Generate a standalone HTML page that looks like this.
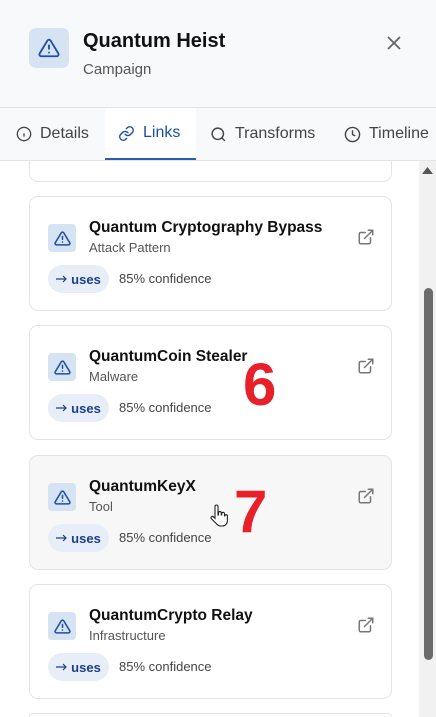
<!DOCTYPE html>
<html><head><meta charset="utf-8"><style>
*{box-sizing:border-box;margin:0;padding:0}
html,body{width:436px;height:717px;overflow:hidden}
body{background:#fff;font-family:"Liberation Sans",sans-serif;position:relative}
.hdr{position:absolute;left:0;top:0;width:436px;height:108px;background:#f8f9fa;border-bottom:1px solid #dfe1e5;z-index:5}
.hicon{position:absolute;left:29px;top:28px;width:40px;height:40px;border-radius:7px;background:#d6e3f3;display:flex;align-items:center;justify-content:center}
.title{position:absolute;left:83px;top:30px;font-size:20px;font-weight:bold;color:#111}
.sub{position:absolute;left:83px;top:61px;font-size:15px;color:#555}
.close{position:absolute;left:386px;top:35px}
.tabs{position:absolute;left:0;top:108px;width:436px;height:53px;background:#f8f9fa;border-bottom:1px solid #e3e5e8;z-index:5}
.tab{position:absolute;top:0;height:52px;display:flex;align-items:center;gap:8px;font-size:16px;color:#444}
.tab.act{background:#fff;color:#1d4fa8;border-bottom:2px solid #2a5db8}
.card{position:absolute;left:29px;width:363px;height:115px;border:1px solid #e2e4e8;border-radius:9px;background:#fff}
.card.hov{background:#f7f7f8}
.ci{position:absolute;left:18px;top:27px;width:28px;height:28px;border-radius:4px;background:#d6e3f3;display:flex;align-items:center;justify-content:center}
.cn{position:absolute;left:59px;top:22px;font-size:15.5px;font-weight:bold;color:#111}
.ct{position:absolute;left:59px;top:43px;font-size:13px;color:#555}
.ext{position:absolute;left:327px;top:31px}
.pill{position:absolute;left:18px;top:68px;width:61px;height:28px;border-radius:14px;background:#e8eef8;color:#1d3f8a;font-size:13px;font-weight:bold;display:flex;align-items:center;justify-content:center;gap:4px}
.conf{position:absolute;left:89px;top:74px;font-size:13px;color:#444}
.sb{position:absolute;left:419px;top:161px;width:17px;height:556px;background:#f1f1f1;z-index:6}
.thumb{position:absolute;left:424px;top:288px;width:9px;height:372px;border-radius:5px;background:#6b6b6b;z-index:7}
.num{position:absolute;font-size:60px;font-weight:bold;color:#e8202a;line-height:1}
</style></head><body>
<div class="card" style="top:67px"></div>

<div class="card" style="top:196px"><div class="ci"><svg width="17" height="17" viewBox="0 0 24 24" fill="none" stroke="#1d4fa8" stroke-width="2.2" stroke-linecap="round" stroke-linejoin="round"><path d="M10.3 3.9 1.8 18a2 2 0 0 0 1.7 3h17a2 2 0 0 0 1.7-3L13.7 3.9a2 2 0 0 0-3.4 0z"/><path d="M12 9v4M12 17h.01"/></svg></div><div class="cn">Quantum Cryptography Bypass</div><div class="ct">Attack Pattern</div><svg class="ext" width="18" height="18" viewBox="0 0 24 24" fill="none" stroke="#777" stroke-width="2" stroke-linecap="round"><path d="M18 13v6a2 2 0 0 1-2 2H5a2 2 0 0 1-2-2V8a2 2 0 0 1 2-2h6M15 3h6v6M10 14 21 3"/></svg><div class="pill"><svg width="11" height="8" viewBox="0 0 11 8" fill="none" stroke="#1d3f8a" stroke-width="1.2"><path d="M0 4h10M7 1l3 3-3 3"/></svg>uses</div><div class="conf">85% confidence</div></div>

<div class="card" style="top:325px"><div class="ci"><svg width="17" height="17" viewBox="0 0 24 24" fill="none" stroke="#1d4fa8" stroke-width="2.2" stroke-linecap="round" stroke-linejoin="round"><path d="M10.3 3.9 1.8 18a2 2 0 0 0 1.7 3h17a2 2 0 0 0 1.7-3L13.7 3.9a2 2 0 0 0-3.4 0z"/><path d="M12 9v4M12 17h.01"/></svg></div><div class="cn">QuantumCoin Stealer</div><div class="ct">Malware</div><svg class="ext" width="18" height="18" viewBox="0 0 24 24" fill="none" stroke="#777" stroke-width="2" stroke-linecap="round"><path d="M18 13v6a2 2 0 0 1-2 2H5a2 2 0 0 1-2-2V8a2 2 0 0 1 2-2h6M15 3h6v6M10 14 21 3"/></svg><div class="pill"><svg width="11" height="8" viewBox="0 0 11 8" fill="none" stroke="#1d3f8a" stroke-width="1.2"><path d="M0 4h10M7 1l3 3-3 3"/></svg>uses</div><div class="conf">85% confidence</div></div>

<div class="card hov" style="top:455px"><div class="ci"><svg width="17" height="17" viewBox="0 0 24 24" fill="none" stroke="#1d4fa8" stroke-width="2.2" stroke-linecap="round" stroke-linejoin="round"><path d="M10.3 3.9 1.8 18a2 2 0 0 0 1.7 3h17a2 2 0 0 0 1.7-3L13.7 3.9a2 2 0 0 0-3.4 0z"/><path d="M12 9v4M12 17h.01"/></svg></div><div class="cn">QuantumKeyX</div><div class="ct">Tool</div><svg class="ext" width="18" height="18" viewBox="0 0 24 24" fill="none" stroke="#777" stroke-width="2" stroke-linecap="round"><path d="M18 13v6a2 2 0 0 1-2 2H5a2 2 0 0 1-2-2V8a2 2 0 0 1 2-2h6M15 3h6v6M10 14 21 3"/></svg><div class="pill"><svg width="11" height="8" viewBox="0 0 11 8" fill="none" stroke="#1d3f8a" stroke-width="1.2"><path d="M0 4h10M7 1l3 3-3 3"/></svg>uses</div><div class="conf">85% confidence</div></div>

<div class="card" style="top:584px"><div class="ci"><svg width="17" height="17" viewBox="0 0 24 24" fill="none" stroke="#1d4fa8" stroke-width="2.2" stroke-linecap="round" stroke-linejoin="round"><path d="M10.3 3.9 1.8 18a2 2 0 0 0 1.7 3h17a2 2 0 0 0 1.7-3L13.7 3.9a2 2 0 0 0-3.4 0z"/><path d="M12 9v4M12 17h.01"/></svg></div><div class="cn">QuantumCrypto Relay</div><div class="ct">Infrastructure</div><svg class="ext" width="18" height="18" viewBox="0 0 24 24" fill="none" stroke="#777" stroke-width="2" stroke-linecap="round"><path d="M18 13v6a2 2 0 0 1-2 2H5a2 2 0 0 1-2-2V8a2 2 0 0 1 2-2h6M15 3h6v6M10 14 21 3"/></svg><div class="pill"><svg width="11" height="8" viewBox="0 0 11 8" fill="none" stroke="#1d3f8a" stroke-width="1.2"><path d="M0 4h10M7 1l3 3-3 3"/></svg>uses</div><div class="conf">85% confidence</div></div>

<div style="position:absolute;left:29px;top:713px;width:363px;height:4px;border:1px solid #e2e4e8;border-bottom:none;border-radius:9px 9px 0 0"></div>

<div class="hdr">
 <div class="hicon"><svg width="22" height="22" viewBox="0 0 24 24" fill="none" stroke="#1d4fa8" stroke-width="2" stroke-linecap="round" stroke-linejoin="round"><path d="M10.3 3.9 1.8 18a2 2 0 0 0 1.7 3h17a2 2 0 0 0 1.7-3L13.7 3.9a2 2 0 0 0-3.4 0z"/><path d="M12 9v4M12 17h.01"/></svg></div>
 <div class="title">Quantum Heist</div>
 <div class="sub">Campaign</div>
 <svg class="close" width="16" height="16" viewBox="0 0 16 16" stroke="#666" stroke-width="1.8"><path d="M2 2l12 12M14 2L2 14"/></svg>
</div>
<div class="tabs">
 <div class="tab" style="left:16px"><svg width="16" height="16" viewBox="0 0 24 24" fill="none" stroke="#444" stroke-width="2"><circle cx="12" cy="12" r="10"/><path d="M12 16v-5M12 8h.01"/></svg>Details</div>
 <div class="tab act" style="left:105px;width:91px;padding-left:13px"><svg width="17" height="17" viewBox="0 0 24 24" fill="none" stroke="#1d4fa8" stroke-width="2" stroke-linecap="round"><path d="M10 13a5 5 0 0 0 7.5.5l3-3a5 5 0 0 0-7-7l-1.7 1.7"/><path d="M14 11a5 5 0 0 0-7.5-.5l-3 3a5 5 0 0 0 7 7l1.7-1.7"/></svg>Links</div>
 <div class="tab" style="left:210px"><svg width="17" height="17" viewBox="0 0 24 24" fill="none" stroke="#444" stroke-width="2"><circle cx="11" cy="11" r="8"/><path d="M21 21l-4.3-4.3"/></svg>Transforms</div>
 <div class="tab" style="left:344px"><svg width="17" height="17" viewBox="0 0 24 24" fill="none" stroke="#444" stroke-width="2"><circle cx="12" cy="12" r="10"/><path d="M12 6v6l4 2"/></svg>Timeline</div>
</div>

<div class="sb"></div>
<svg style="position:absolute;left:422px;top:166px;z-index:8" width="11" height="8" viewBox="0 0 11 8"><path d="M0 8L5.5 1 11 8z" fill="#555"/></svg>
<div class="thumb"></div>

<div class="num" style="left:243px;top:355px">6</div>
<div class="num" style="left:234px;top:482px">7</div>
<svg style="position:absolute;left:209px;top:504px" width="20" height="24" viewBox="0 0 20 24"><path d="M6 2.5a1.5 1.5 0 0 1 3 0V11h.5V9a1.4 1.4 0 0 1 2.8 0v2h.4v-1.3a1.4 1.4 0 0 1 2.8 0V12h.3a1.3 1.3 0 0 1 2.6 0v4.5c0 3-2 5.5-5 5.5h-2c-2 0-3-1-4.3-2.6L2.3 14.6a1.4 1.4 0 0 1 2-1.9L6 14.3z" fill="#fff" stroke="#222" stroke-width="1.1"/></svg>
</body></html>
